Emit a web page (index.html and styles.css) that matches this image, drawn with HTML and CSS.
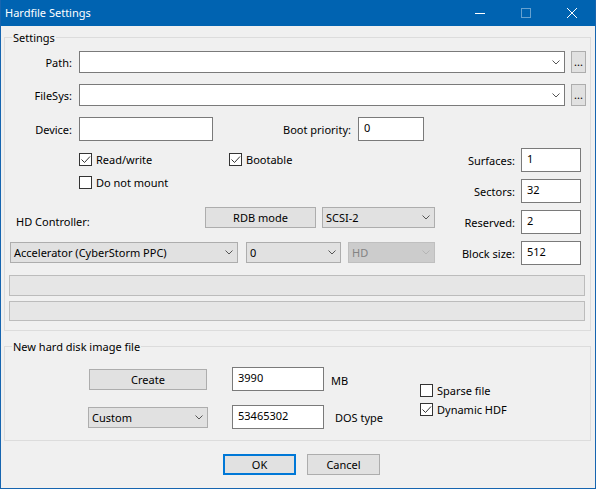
FILE: index.html
```html
<!DOCTYPE html>
<html lang="en">
<head>
    <meta charset="UTF-8">
    <title>Hardfile Settings</title>
    <link rel="stylesheet" href="styles.css">
</head>
<body>
    <div class="window">
        <div class="titlebar">
            <span class="title">Hardfile Settings</span>
            <div class="caption-buttons">
                <span class="cap-btn"><svg width="10" height="10"><line x1="0" y1="5.5" x2="10" y2="5.5" stroke="#fff"/></svg></span>
                <span class="cap-btn"><svg width="10" height="10"><rect x="0.5" y="0.5" width="9" height="9" fill="none" stroke="rgba(255,255,255,0.4)"/></svg></span>
                <span class="cap-btn"><svg width="10" height="10"><path d="M0 0 L10 10 M10 0 L0 10" stroke="#fff"/></svg></span>
            </div>
        </div>

        <div class="client">
            <div class="group settings">
                <span class="group-title">Settings</span>

                <div class="row row-path">
                    <span class="field-label">Path:</span>
                    <div class="combo edit path-combo">
                        <span></span>
                        <svg class="chev" width="8" height="5"><polyline points="0.5,0.5 4,4 7.5,0.5" fill="none" stroke="#555"/></svg>
                    </div>
                    <button class="btn dots">...</button>
                </div>

                <div class="row row-filesys">
                    <span class="field-label">FileSys:</span>
                    <div class="combo edit path-combo">
                        <span></span>
                        <svg class="chev" width="8" height="5"><polyline points="0.5,0.5 4,4 7.5,0.5" fill="none" stroke="#555"/></svg>
                    </div>
                    <button class="btn dots">...</button>
                </div>

                <div class="row row-device">
                    <span class="field-label">Device:</span>
                    <input class="edit-box device-input" type="text" value="">
                    <span class="boot-label">Boot priority:</span>
                    <input class="edit-box boot-input" type="text" value="0">
                </div>

                <div class="mid">
                    <div class="mid-left">
                        <div class="checks-row first">
                            <label class="check read-write">
                                <span class="box"><svg width="11" height="11"><polyline points="1.5,5.5 4.5,8.5 10,2.5" fill="none" stroke="#333"/></svg></span>
                                Read/write
                            </label>
                            <label class="check">
                                <span class="box"><svg width="11" height="11"><polyline points="1.5,5.5 4.5,8.5 10,2.5" fill="none" stroke="#333"/></svg></span>
                                Bootable
                            </label>
                        </div>
                        <div class="checks-row second">
                            <label class="check">
                                <span class="box"></span>
                                Do not mount
                            </label>
                        </div>

                        <div class="hd-row">
                            <span class="hd-label">HD Controller:</span>
                            <button class="btn rdb-btn">RDB mode</button>
                            <div class="combo scsi-combo">
                                <span>SCSI-2</span>
                                <svg class="chev" width="8" height="5"><polyline points="0.5,0.5 4,4 7.5,0.5" fill="none" stroke="#555"/></svg>
                            </div>
                        </div>

                        <div class="controller-row">
                            <div class="combo accel-combo">
                                <span>Accelerator (CyberStorm PPC)</span>
                                <svg class="chev" width="8" height="5"><polyline points="0.5,0.5 4,4 7.5,0.5" fill="none" stroke="#555"/></svg>
                            </div>
                            <div class="combo unit-combo">
                                <span>0</span>
                                <svg class="chev" width="8" height="5"><polyline points="0.5,0.5 4,4 7.5,0.5" fill="none" stroke="#555"/></svg>
                            </div>
                            <div class="combo disabled type-combo">
                                <span>HD</span>
                                <svg class="chev" width="8" height="5"><polyline points="0.5,0.5 4,4 7.5,0.5" fill="none" stroke="#b5b5b5"/></svg>
                            </div>
                        </div>
                    </div>

                    <div class="mid-right">
                        <div class="geo-row">
                            <span class="geo-label">Surfaces:</span>
                            <input class="edit-box geo-input" type="text" value="1">
                        </div>
                        <div class="geo-row">
                            <span class="geo-label">Sectors:</span>
                            <input class="edit-box geo-input" type="text" value="32">
                        </div>
                        <div class="geo-row">
                            <span class="geo-label">Reserved:</span>
                            <input class="edit-box geo-input" type="text" value="2">
                        </div>
                        <div class="geo-row">
                            <span class="geo-label">Block size:</span>
                            <input class="edit-box geo-input" type="text" value="512">
                        </div>
                    </div>
                </div>

                <div class="bar first"></div>
                <div class="bar second"></div>
            </div>

            <div class="group new-image">
                <span class="group-title">New hard disk image file</span>

                <div class="new-left">
                    <div class="new-row">
                        <div class="cell">
                            <button class="btn create-btn">Create</button>
                        </div>
                        <input class="edit-box size-input" type="text" value="3990">
                        <span class="unit-label">MB</span>
                    </div>
                    <div class="new-row second">
                        <div class="cell">
                            <div class="combo custom-combo">
                                <span>Custom</span>
                                <svg class="chev" width="8" height="5"><polyline points="0.5,0.5 4,4 7.5,0.5" fill="none" stroke="#555"/></svg>
                            </div>
                        </div>
                        <input class="edit-box size-input" type="text" value="53465302">
                        <span class="dostype-label">DOS type</span>
                    </div>
                </div>

                <div class="new-right">
                    <label class="check">
                        <span class="box"></span>
                        Sparse file
                    </label>
                    <label class="check second">
                        <span class="box"><svg width="11" height="11"><polyline points="1.5,5.5 4.5,8.5 10,2.5" fill="none" stroke="#333"/></svg></span>
                        Dynamic HDF
                    </label>
                </div>
            </div>

            <div class="dialog-buttons">
                <button class="btn default">OK</button>
                <button class="btn cancel">Cancel</button>
            </div>
        </div>
    </div>
</body>
</html>
```

FILE: styles.css
```css
* {
    margin: 0;
    padding: 0;
    box-sizing: border-box;
}

body {
    font-family: 'Noto Sans', 'Open Sans', sans-serif;
    font-size: 11px;
    color: #000;
    background-color: #f0f0f0;
}

.window {
    width: 596px;
    height: 489px;
    border: 1px solid #1665b0;
    border-top: none;
    background-color: #f0f0f0;
    display: flex;
    flex-direction: column;
}

/* title bar */

.titlebar {
    height: 26px;
    background-color: #0063b1;
    color: #fff;
    display: flex;
    align-items: center;
    justify-content: space-between;
    padding-left: 4px;
}

.title {
    line-height: 16px;
}

.caption-buttons {
    display: flex;
    height: 100%;
}

.cap-btn {
    width: 46px;
    height: 100%;
    display: flex;
    align-items: center;
    justify-content: center;
}

.cap-btn svg {
    display: block;
}

/* group boxes */

.client {
    flex: 1;
    display: flex;
    flex-direction: column;
}

.group {
    position: relative;
    border: 1px solid #dcdcdc;
    margin: 11px 4px 0 3px;
}

.group-title {
    position: absolute;
    top: -8px;
    left: 7px;
    padding: 0 1px;
    line-height: 16px;
    background-color: #f0f0f0;
}

.settings {
    height: 294px;
}

.new-image {
    height: 95px;
    margin-top: 15px;
    display: flex;
}

/* common controls */

.btn {
    font: inherit;
    color: #000;
    background-color: #e1e1e1;
    border: 1px solid #adadad;
    flex-shrink: 0;
}

.combo {
    display: flex;
    align-items: center;
    justify-content: space-between;
    flex-shrink: 0;
    height: 21px;
    padding: 0 4px 0 3px;
    background-color: #e1e1e1;
    border: 1px solid #adadad;
    white-space: nowrap;
}

.combo.edit {
    background-color: #fff;
    border-color: #7a7a7a;
}

.combo.disabled {
    background-color: #cccccc;
    border-color: #bfbfbf;
    color: #838383;
}

.chev {
    display: block;
    flex-shrink: 0;
}

.edit-box {
    font: inherit;
    color: #000;
    height: 24px;
    padding: 0 5px 3px;
    background-color: #fff;
    border: 1px solid #7a7a7a;
    outline: none;
    flex-shrink: 0;
}

.check {
    display: flex;
    align-items: center;
    height: 16px;
    white-space: nowrap;
}

.box {
    width: 13px;
    height: 13px;
    margin-right: 4px;
    border: 1px solid #333;
    background-color: #fff;
    flex-shrink: 0;
}

.box svg {
    display: block;
}

/* settings group */

.row {
    display: flex;
    align-items: center;
}

.row-path {
    margin-top: 13px;
    height: 22px;
}

.row-filesys {
    margin-top: 11px;
    height: 22px;
}

.row-device {
    margin-top: 11px;
    height: 24px;
}

.field-label {
    width: 67px;
    margin-right: 7px;
    text-align: right;
}

.path-combo {
    width: 486px;
    height: 22px;
}

.dots {
    width: 15px;
    height: 22px;
    margin-left: 6px;
    line-height: 14px;
}

.device-input {
    width: 134px;
}

.boot-label {
    width: 138px;
    margin-right: 7px;
    text-align: right;
}

.boot-input {
    width: 66px;
}

.mid {
    display: flex;
}

.mid-left {
    flex: 1;
}

.checks-row {
    display: flex;
    padding-left: 74px;
}

.checks-row.first {
    margin-top: 10px;
}

.checks-row.second {
    margin-top: 7px;
}

.read-write {
    width: 150px;
}

.hd-row {
    display: flex;
    align-items: flex-start;
    height: 21px;
    margin-top: 17px;
    padding-left: 11px;
}

.hd-label {
    width: 189px;
    margin-top: 7px;
    line-height: 16px;
}

.rdb-btn {
    width: 111px;
    height: 21px;
}

.scsi-combo {
    width: 113px;
    margin-left: 6px;
}

.controller-row {
    display: flex;
    margin-top: 14px;
    padding-left: 5px;
}

.accel-combo {
    width: 228px;
}

.unit-combo {
    width: 95px;
    margin-left: 8px;
}

.type-combo {
    width: 87px;
    margin-left: 7px;
}

.mid-right {
    width: 146px;
    margin-right: 10px;
    padding-top: 7px;
}

.geo-row {
    display: flex;
    align-items: center;
    margin-bottom: 7px;
}

.geo-row:last-child {
    margin-bottom: 0;
}

.geo-label {
    width: 80px;
    margin-right: 6px;
    text-align: right;
}

.geo-input {
    width: 60px;
}

.bar {
    height: 21px;
    margin: 10px 5px 0 4px;
    background-color: #e6e6e6;
    border: 1px solid #bcbcbc;
}

.bar.second {
    height: 20px;
    margin-top: 5px;
}

/* new image group */

.new-left {
    width: 415px;
    padding-top: 20px;
}

.new-row {
    display: flex;
    align-items: center;
    height: 24px;
    padding-left: 83px;
}

.new-row.second {
    margin-top: 14px;
}

.cell {
    width: 120px;
    display: flex;
}

.create-btn {
    width: 118px;
    height: 21px;
    margin-left: 1px;
}

.custom-combo {
    width: 120px;
}

.size-input {
    width: 92px;
    margin-left: 24px;
}

.unit-label {
    margin-left: 7px;
    margin-top: 3px;
}

.dostype-label {
    margin-left: 11px;
}

.new-right {
    padding-top: 35px;
}

.new-right .check.second {
    margin-top: 3px;
}

/* dialog buttons */

.dialog-buttons {
    display: flex;
    margin-top: 13px;
    padding-left: 222px;
}

.dialog-buttons .btn {
    width: 73px;
    height: 21px;
}

.dialog-buttons .default {
    border: 2px solid #0078d7;
}

.dialog-buttons .cancel {
    margin-left: 11px;
}
```
